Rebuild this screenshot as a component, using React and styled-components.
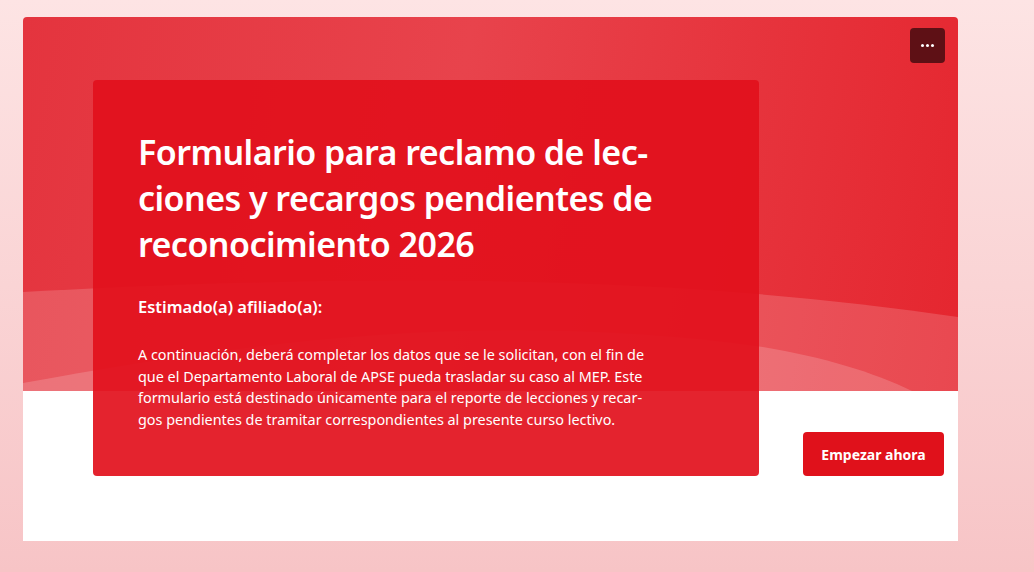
import React from "react";
import styled, { createGlobalStyle } from "styled-components";

const GlobalStyle = createGlobalStyle`
    html, body {
        margin: 0;
        padding: 0;
    }
    body {
        min-height: 572px;
        background: linear-gradient(180deg, #fde4e4 0%, #f7c4c6 100%);
        font-family: "Segoe UI", "Noto Sans", "Open Sans", sans-serif;
        color: #fff;
    }
`;

const Page = styled.div`
    padding: 17px 0 0 23px;
    height: 572px;
    box-sizing: border-box;
`;

const Card = styled.section`
    position: relative;
    width: 935px;
    height: 524px;
    box-sizing: border-box;
    border-radius: 4px 4px 0 0;
    overflow: hidden;
    background: linear-gradient(100deg, #e4343e 0%, #e8434c 45%, #e5262f 100%) top / 100% 374px
            no-repeat,
        #fff;
    display: flex;
    align-items: flex-end;
    padding: 63px 14px 65px 70px;
`;

const Waves = styled.svg`
    position: absolute;
    left: 0;
    top: 0;
    width: 935px;
    height: 374px;
    pointer-events: none;
`;

const MoreBtn = styled.button`
    position: absolute;
    top: 11px;
    right: 13px;
    width: 35px;
    height: 35px;
    border: none;
    border-radius: 4px;
    background: #5e1015;
    display: flex;
    align-items: center;
    justify-content: center;
    gap: 2px;
    padding: 0;
    cursor: pointer;
`;

const Dot = styled.span`
    width: 3px;
    height: 3px;
    border-radius: 50%;
    background: #fff;
`;

const InfoBox = styled.div`
    position: relative;
    width: 666px;
    height: 396px;
    box-sizing: border-box;
    padding: 49px 100px 0 45px;
    border-radius: 4px;
    background: rgba(226, 16, 28, 0.92);
`;

const Title = styled.h1`
    margin: 0;
    font-size: 34px;
    font-weight: 600;
    line-height: 46px;
    letter-spacing: -0.55px;
`;

const Greeting = styled.h2`
    margin: 28px 0 0;
    font-size: 16.5px;
    font-weight: 600;
    line-height: 24px;
`;

const Body = styled.p`
    margin: 25px 0 0;
    font-size: 14.4px;
    line-height: 21.5px;
    font-weight: 400;
`;

const StartBtn = styled.button`
    margin-left: auto;
    width: 141px;
    height: 44px;
    border: none;
    border-radius: 4px;
    background: #e0111b;
    color: #fff;
    font-family: inherit;
    font-size: 14px;
    font-weight: 700;
    cursor: pointer;
`;

export default function App() {
    return (
        <>
            <GlobalStyle />
            <Page>
                <Card>
                    <Waves viewBox="0 0 935 374">
                        <path
                            d="M0 275 C 250 262, 600 250, 935 300 L 935 374 L 0 374 Z"
                            fill="rgba(255,255,255,0.16)"
                        />
                        <path
                            d="M0 366 C 200 330, 450 290, 740 330 C 800 340, 850 355, 889 374 L 0 374 Z"
                            fill="rgba(255,255,255,0.17)"
                        />
                    </Waves>
                    <MoreBtn aria-label="Más opciones">
                        <Dot />
                        <Dot />
                        <Dot />
                    </MoreBtn>
                    <InfoBox>
                        <Title lang="es">
                            Formulario para reclamo de lec&shy;ciones y recargos pendientes de
                            reconocimiento 2026
                        </Title>
                        <Greeting>Estimado(a) afiliado(a):</Greeting>
                        <Body lang="es">
                            A continuación, deberá completar los datos que se le solicitan, con
                            el fin de que el Departamento Laboral de APSE pueda trasladar su caso
                            al MEP. Este formulario está destinado únicamente para el reporte de
                            lecciones y recar&shy;gos pendientes de tramitar correspondientes al
                            presente curso lectivo.
                        </Body>
                    </InfoBox>
                    <StartBtn>Empezar ahora</StartBtn>
                </Card>
            </Page>
        </>
    );
}
